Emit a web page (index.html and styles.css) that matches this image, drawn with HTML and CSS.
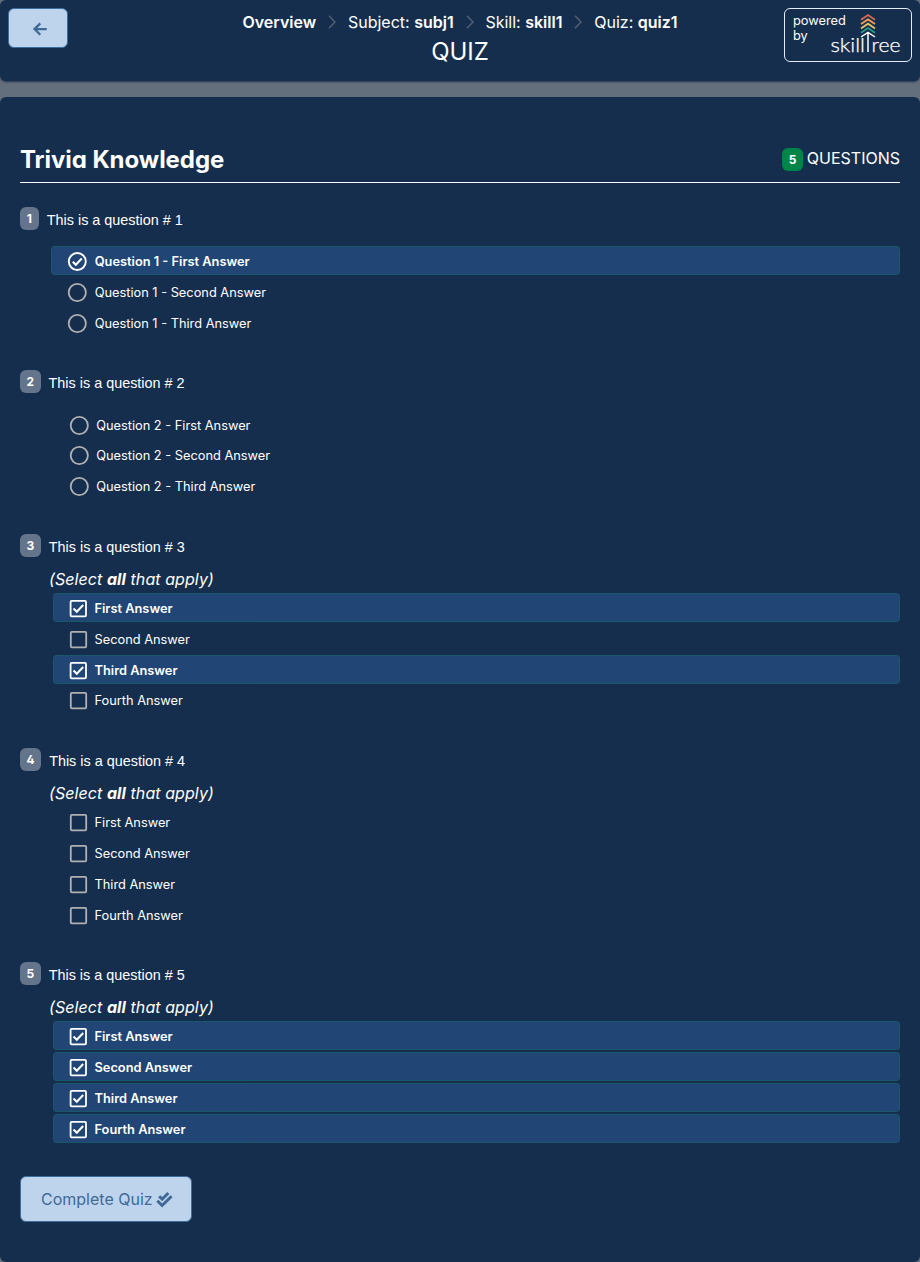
FILE: index.html
```
<!DOCTYPE html>
<html lang="en">
<head>
<meta charset="utf-8">
<title>Quiz</title>
<link rel="stylesheet" href="styles.css">
</head>
<body>
<svg class="defs" aria-hidden="true">
  <symbol id="sep" viewBox="0 0 8 14"><path d="M1 .8L7 7l-6 6.2" fill="none" stroke="currentColor" stroke-width="1.5"/></symbol>
  <symbol id="circle" viewBox="0 0 20 20"><circle cx="10.3" cy="9.5" r="8.6" fill="none" stroke="currentColor" stroke-width="1.8"/></symbol>
  <symbol id="circle-check" viewBox="0 0 20 20"><g fill="none" stroke="currentColor"><circle cx="10.3" cy="9.5" r="8.5" stroke-width="1.9"/><path d="M5.8 9.7l3 3 6-6.1" stroke-width="2.1"/></g></symbol>
  <symbol id="square" viewBox="0 0 20 20"><rect x="1.8" y="1.9" width="15.4" height="15.4" rx="1" fill="none" stroke="currentColor" stroke-width="1.8"/></symbol>
  <symbol id="square-check" viewBox="0 0 20 20"><g fill="none" stroke="currentColor"><rect x="1.6" y="1.9" width="15.4" height="15.4" rx="1" stroke-width="1.8"/><path d="M4.5 9.5l3.3 3.2 6.4-6.6" stroke-width="2.1"/></g></symbol>
</svg>

<header class="header">
  <button class="btn back" aria-label="Back">
    <svg width="15" height="14" viewBox="0 0 15 14"><path d="M8.3 1.4L2.5 7.1l5.8 5.7M2.7 7.1h12" fill="none" stroke="currentColor" stroke-width="2.3"/></svg>
  </button>
  <div class="heading">
    <nav class="crumbs">
      <b>Overview</b><svg><use href="#sep"/></svg>
      <span>Subject: <b>subj1</b></span><svg><use href="#sep"/></svg>
      <span>Skill: <b>skill1</b></span><svg><use href="#sep"/></svg>
      <span>Quiz: <b>quiz1</b></span>
    </nav>
    <h1 class="page-title">QUIZ</h1>
  </div>
  <div class="powered">
    <div class="powered-text"><span>powered</span><span>by</span></div>
    <svg class="logo" width="72" height="44" viewBox="0 0 72 44">
      <g fill="none" stroke-width="1.8">
        <path d="M30 6.8L37 2.1l7 4.7" stroke="#d9694f"/>
        <path d="M30 11.1l7-4.7 7 4.7" stroke="#f19c58"/>
        <path d="M30 15.4l7-4.7 7 4.7" stroke="#e8c065"/>
        <path d="M30 19.7l7-4.7 7 4.7" stroke="#279c88"/>
        <path d="M30 24l7-4.7 7 4.7M37 19.6V39" stroke="#fff" stroke-width="1.5"/>
      </g>
      <text x="-.5" y="39" textLength="34.5" lengthAdjust="spacingAndGlyphs">skill</text>
      <text x="40.5" y="39" textLength="29" lengthAdjust="spacingAndGlyphs">ree</text>
    </svg>
  </div>
</header>

<main class="quiz">
  <div class="quiz-head">
    <h2>Trivia Knowledge</h2>
    <div class="count"><span class="badge green">5</span> QUESTIONS</div>
  </div>

  <section class="question q1">
    <div class="q-line"><span class="badge">1</span><p>This is a question # 1</p></div>
    <ul class="answers single">
      <li class="selected"><svg><use href="#circle-check"/></svg>Question 1 - First Answer</li>
      <li><svg><use href="#circle"/></svg>Question 1 - Second Answer</li>
      <li><svg><use href="#circle"/></svg>Question 1 - Third Answer</li>
    </ul>
  </section>

  <section class="question q2">
    <div class="q-line"><span class="badge">2</span><p>This is a question # 2</p></div>
    <ul class="answers single">
      <li><svg><use href="#circle"/></svg>Question 2 - First Answer</li>
      <li><svg><use href="#circle"/></svg>Question 2 - Second Answer</li>
      <li><svg><use href="#circle"/></svg>Question 2 - Third Answer</li>
    </ul>
  </section>

  <section class="question q3">
    <div class="q-line"><span class="badge">3</span><p>This is a question # 3</p></div>
    <div class="hint">(Select <b>all</b> that apply)</div>
    <ul class="answers">
      <li class="selected"><svg><use href="#square-check"/></svg>First Answer</li>
      <li><svg><use href="#square"/></svg>Second Answer</li>
      <li class="selected"><svg><use href="#square-check"/></svg>Third Answer</li>
      <li><svg><use href="#square"/></svg>Fourth Answer</li>
    </ul>
  </section>

  <section class="question q4">
    <div class="q-line"><span class="badge">4</span><p>This is a question # 4</p></div>
    <div class="hint">(Select <b>all</b> that apply)</div>
    <ul class="answers">
      <li><svg><use href="#square"/></svg>First Answer</li>
      <li><svg><use href="#square"/></svg>Second Answer</li>
      <li><svg><use href="#square"/></svg>Third Answer</li>
      <li><svg><use href="#square"/></svg>Fourth Answer</li>
    </ul>
  </section>

  <section class="question q5">
    <div class="q-line"><span class="badge">5</span><p>This is a question # 5</p></div>
    <div class="hint">(Select <b>all</b> that apply)</div>
    <ul class="answers">
      <li class="selected"><svg><use href="#square-check"/></svg>First Answer</li>
      <li class="selected"><svg><use href="#square-check"/></svg>Second Answer</li>
      <li class="selected"><svg><use href="#square-check"/></svg>Third Answer</li>
      <li class="selected"><svg><use href="#square-check"/></svg>Fourth Answer</li>
    </ul>
  </section>

  <button class="btn complete">Complete Quiz
    <svg width="17" height="17" viewBox="0 0 17 17"><path d="M3.2 5.2l3 3L12.3 2M1.3 9.8l4.8 4.7L15.6 5.2" fill="none" stroke="currentColor" stroke-width="3"/></svg>
  </button>
</main>
</body>
</html>
```
FILE: styles.css
```
* { box-sizing: border-box; }
body {
  margin: 0;
  background: #646f7e;
  color: #fff;
  font: 16px/24px Inter, sans-serif;
  font-feature-settings: "cv02", "cv03", "cv04", "cv11";
}
.defs { display: none; }
h1, h2, p, ul { margin: 0; padding: 0; }
b { font-weight: 600; }

.header {
  height: 81px;
  margin-bottom: 16px;
  padding: 8px;
  display: grid;
  grid-template-columns: 128px 1fr 128px;
  align-items: start;
  background: #162e4d;
  border-radius: 6px;
  box-shadow: 0 1px 2px #26364a;
}
.btn {
  display: flex;
  align-items: center;
  background: #bed4ec;
  border: 1px solid #3d6d9e;
  border-radius: 6px;
  color: #3f6a97;
  font: inherit;
  font-feature-settings: inherit;
}
.back { width: 60px; height: 40px; padding: 1px 0 0 23px; }

.heading { display: flex; flex-direction: column; align-items: center; padding-top: 2px; }
.crumbs { display: flex; align-items: center; white-space: nowrap; }
.crumbs svg { width: 8px; height: 14px; margin: 0 11.9px; color: #536074; }
.page-title { padding-top: 2px; font-size: 24px; line-height: 32px; font-weight: 400; }

.powered {
  display: flex;
  height: 54px;
  padding: 4px 8px 0;
  border: 1px solid #e3edf6;
  border-radius: 6px;
}
.powered-text {
  display: flex;
  flex-direction: column;
  align-items: flex-start;
  width: 38px;
  flex: none;
  font-size: 12.8px;
  line-height: 15px;
}
.logo { flex: none; fill: #fff; font: 300 19px Lato, sans-serif; }
.logo text { stroke: #fff; stroke-width: .25px; }

.quiz {
  height: 1165px;
  padding: 46px 20px 0;
  background: #162e4d;
  border-radius: 6px;
}
.quiz-head {
  display: flex;
  justify-content: space-between;
  height: 40px;
  border-bottom: 1px solid #fff;
}
.quiz-head h2 { font-size: 24px; line-height: 33px; font-weight: 700; letter-spacing: -.06px; }
.count { display: flex; gap: 4px; line-height: 31px; }
.badge {
  flex: none;
  height: 23px;
  padding: 0 6.5px;
  background: #64748b;
  border-radius: 6px;
  font-size: 12px;
  line-height: 23px;
  font-weight: 700;
}
.badge.green { margin-top: 5px; background: #008548; }

.question { height: 214px; }
.q1 { height: 163px; margin-top: 24px; }
.q1 .badge { padding: 0 6.8px; }
.q2 { height: 164px; }
.q-line { display: flex; gap: 8px; height: 23px; }
.q-line p { font: 14.4px/26px "Liberation Sans", sans-serif; }
.hint { margin: 10px 0 2px 29px; font-style: italic; letter-spacing: .08px; }
.hint b { font-weight: 700; }
.answers { list-style: none; margin-left: 33px; }
.answers.single { margin: 16px 0 0 31px; }
.q2 .answers.single { margin: 17px 0 0 32.5px; }
.answers li {
  display: flex;
  align-items: center;
  height: 29px;
  margin-bottom: 2px;
  padding: 2px 0 0 15px;
  border: 1px dotted transparent;
  border-radius: 4px;
  font-size: 12.8px;
}
.q2 .answers li { margin-bottom: 1.8px; }
.q3 .answers li:last-child { margin-top: -1px; }
.answers svg { width: 20px; height: 20px; margin-right: 5.5px; color: #b0b0b0; }
.answers.single svg { margin-right: 7.7px; }
.answers .selected { background: #214575; border-color: #126b60; font-weight: 600; }
.answers .selected svg { color: #fff; }

.complete { width: 172px; height: 46px; padding: 0 0 0 20px; gap: 3px; }
```
